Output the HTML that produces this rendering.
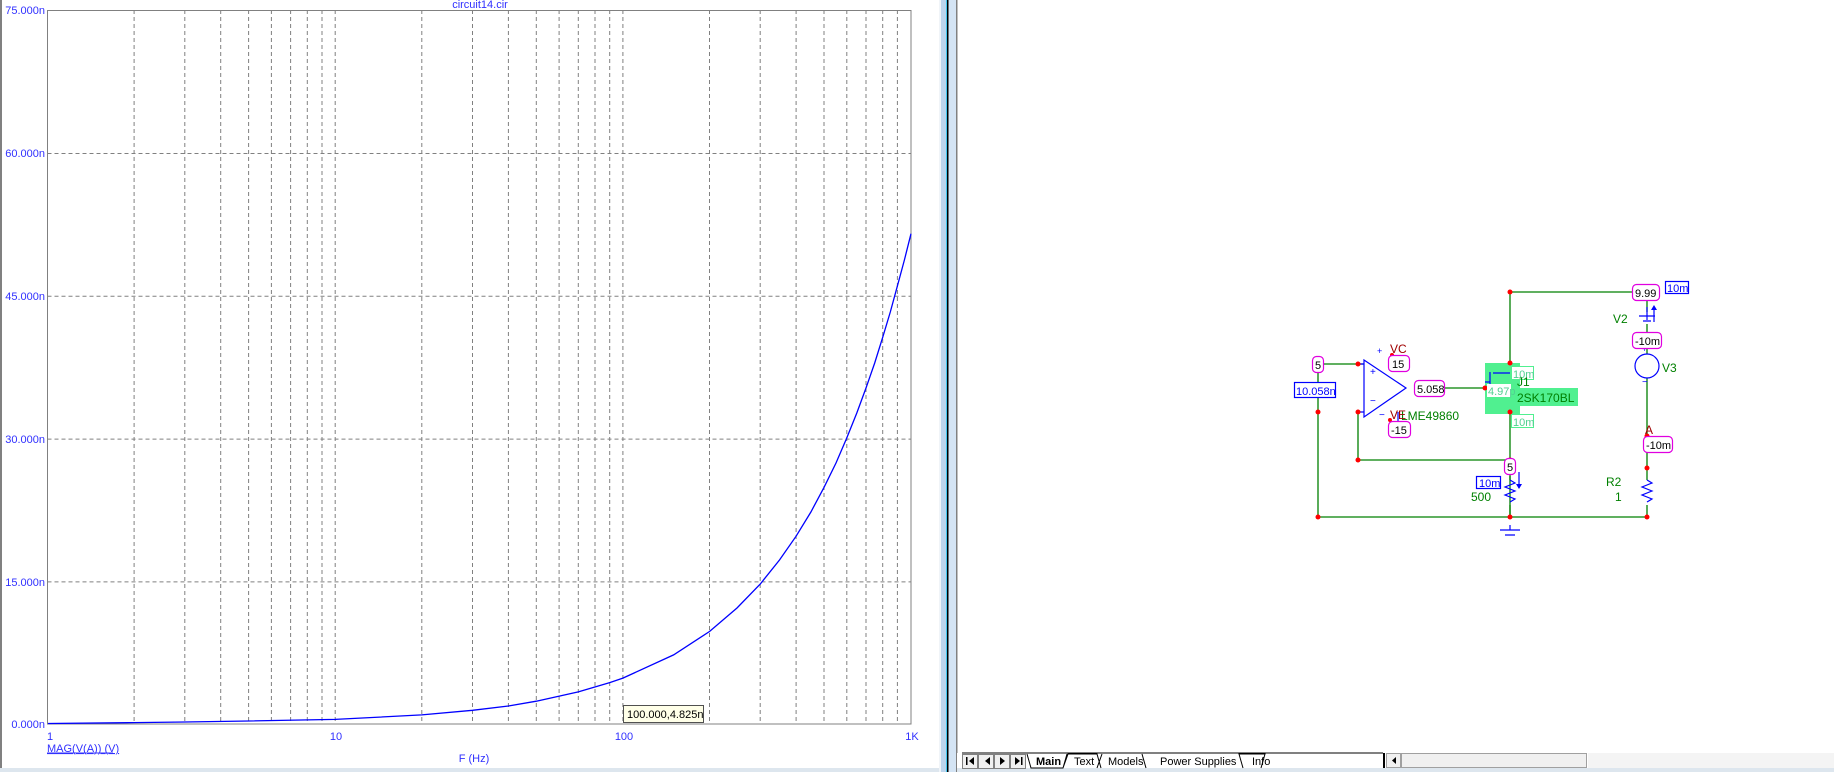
<!DOCTYPE html>
<html><head><meta charset="utf-8"><style>
html,body{margin:0;padding:0;width:1834px;height:772px;overflow:hidden;background:#fff;font-family:"Liberation Sans",Arial,sans-serif}
svg{position:absolute;left:0;top:0}
</style></head><body>
<svg width="1834" height="772" viewBox="0 0 1834 772" xmlns="http://www.w3.org/2000/svg" font-family="Liberation Sans, Arial, sans-serif">
<!-- left panel -->
<rect x="0" y="0" width="2" height="768" fill="#808080"/>
<rect x="0" y="768" width="940" height="4" fill="#dde6ee"/>
<!-- divider -->
<rect x="939" y="0" width="2" height="772" fill="#f0f4f8"/>
<rect x="941" y="0" width="5" height="772" fill="#bcd4ec"/>
<rect x="946" y="0" width="1" height="772" fill="#40c8f0"/>
<rect x="947" y="0" width="1.5" height="772" fill="#000"/>
<rect x="948.5" y="0" width="7.5" height="772" fill="#d4e4f4"/>
<rect x="956" y="0" width="1.5" height="772" fill="#808080"/>
<!-- grid -->
<g stroke="#808080" stroke-width="1" stroke-dasharray="4,3" fill="none">
<path d="M134.1 10V724M184.8 10V724M220.7 10V724M248.6 10V724M271.4 10V724M290.6 10V724M307.3 10V724M322 10V724M335.2 10V724
M421.8 10V724M472.5 10V724M508.4 10V724M536.3 10V724M559.1 10V724M578.3 10V724M595 10V724M609.7 10V724M622.9 10V724
M709.5 10V724M760.2 10V724M796.1 10V724M824 10V724M846.8 10V724M866 10V724M882.7 10V724M897.4 10V724"/>
<path d="M47.5 153.5H911M47.5 296.3H911M47.5 439.1H911M47.5 581.9H911"/>
</g>
<rect x="47.5" y="10.5" width="863.5" height="713.5" fill="none" stroke="#808080" stroke-width="1"/>
<!-- curve -->
<polyline fill="none" stroke="#0000ff" stroke-width="1.3" points="48,723.5 134,722.6 184.8,722 248.6,721 335.2,719.4 421.8,714.9 472.5,710.3 508.4,706 536.3,701.2 578.3,691.9 609.7,682.6 622.9,678.1 673.6,654.9 709.5,631.5 737,608 760.2,584.1 779.5,560 796.1,536.2 810.9,512 824,487.4 836,463 846.7,438.1 856.8,413 866,388 874.7,363 882.7,337.3 890.3,312 897.4,285.9 904.4,260 911,233.7"/>
<!-- labels -->
<g fill="#3030ff" font-size="11" text-anchor="end">
<text x="45" y="14">75.000n</text>
<text x="45" y="157">60.000n</text>
<text x="45" y="300">45.000n</text>
<text x="45" y="443">30.000n</text>
<text x="45" y="586">15.000n</text>
<text x="45" y="728">0.000n</text>
</g>
<g fill="#3030ff" font-size="11" text-anchor="middle">
<text x="50" y="740">1</text>
<text x="336" y="740">10</text>
<text x="624" y="740">100</text>
<text x="912" y="740">1K</text>
<text x="480" y="8">circuit14.cir</text>
<text x="474" y="762">F (Hz)</text>
</g>
<text x="47" y="752" fill="#3030ff" font-size="11" text-decoration="underline">MAG(V(A)) (V)</text>
<line x1="47" y1="753" x2="113" y2="753" stroke="#3030ff"/>
<rect x="623.5" y="705.5" width="80" height="17" fill="#ffffe8" stroke="#505050"/>
<text x="627" y="718" font-size="11" fill="#000">100.000,4.825n</text>

<!-- circuit wires -->
<g stroke="#008000" stroke-width="1.3" fill="none">
<path d="M1510 292H1633M1659 292H1647"/>
<path d="M1510 292V363M1510 412V517M1318 373V388M1318 398V517M1318 517H1647"/>
<path d="M1323 364H1364M1358 412V460H1510M1444 388H1485"/>
<path d="M1647 300V312M1647 324V332M1647 348V354M1647 378V436M1647 452V480M1647 505V517"/>
<path d="M1510 476V480M1510 505V517"/>
</g>
<!-- opamp -->
<g stroke="#0000ff" stroke-width="1.2" fill="none">
<path d="M1364 360V417L1406 388Z"/>
<path d="M1358 364H1364M1358 412H1364M1398 355V365M1398 412V424"/>
<path d="M1647 307V320M1639 316H1655M1643 321H1651"/>
<circle cx="1647" cy="366" r="12"/>
<path d="M1510 480l5 3-10 4 10 4-10 4 10 4-5 3"/>
<path d="M1647 480l5 3-10 4 10 4-10 4 10 4-5 3"/>
<path d="M1510 525V530M1500 530H1520M1505 535H1515"/>
<path d="M1490 378V398M1493 379H1510M1493 397H1510"/>
<path d="M1519 472V488M1654 307V322"/>
</g>
<g font-size="10" fill="#0000ff">
<text x="1370" y="375">+</text><text x="1370" y="404">−</text>
<text x="1377" y="354" font-size="9">+</text><text x="1379" y="418">−</text>
<text x="1642" y="385">−</text><text x="1642" y="352" font-size="9">+</text>
</g>
<path d="M1519 489l-3-5h6z M1654 305l-3 5h6z M1490 382l-4 -3v6z M1334 386l-2 5h4z" fill="#0000ff"/>
<!-- JFET highlight -->
<rect x="1485" y="363" width="35" height="51" fill="#50f090"/>
<rect x="1516" y="388" width="62" height="18" fill="#50f090"/>
<g stroke="#0000ff" stroke-width="1.2" fill="none"><path d="M1490 372V392M1493 373H1510M1493 391H1510M1485 382H1490"/></g>
<!-- dots -->
<g fill="#ff0000">
<circle cx="1510" cy="292" r="2.5"/><circle cx="1318" cy="412" r="2.5"/><circle cx="1358" cy="364" r="2.5"/>
<circle cx="1358" cy="412" r="2.5"/><circle cx="1358" cy="460" r="2.5"/><circle cx="1510" cy="460" r="2.5"/>
<circle cx="1318" cy="517" r="2.5"/><circle cx="1510" cy="517" r="2.5"/><circle cx="1647" cy="517" r="2.5"/>
<circle cx="1647" cy="468" r="2.5"/><circle cx="1647" cy="436" r="2.5"/><circle cx="1510" cy="363" r="2.5"/>
<circle cx="1510" cy="412" r="2.5"/><circle cx="1485" cy="388" r="2.5"/><circle cx="1392" cy="355" r="2"/><circle cx="1390" cy="420" r="2"/>
</g>
<!-- labels: magenta rounded boxes -->
<g stroke="#e000e0" stroke-width="1.2" fill="#fff">
<rect x="1312.5" y="356.5" width="11" height="16" rx="4"/>
<rect x="1388.5" y="355.5" width="21" height="16" rx="4"/>
<rect x="1388.5" y="421.5" width="22" height="16" rx="4"/>
<rect x="1414.5" y="380.5" width="30" height="16" rx="4"/>
<rect x="1632.5" y="284.5" width="27" height="16" rx="4"/>
<rect x="1632.5" y="332.5" width="29" height="16" rx="4"/>
<rect x="1643.5" y="436.5" width="29" height="16" rx="4"/>
<rect x="1504.5" y="458.5" width="11" height="16" rx="4"/>
</g>
<g stroke="#0000ff" stroke-width="1.2" fill="#fff">
<rect x="1294.5" y="382.5" width="41" height="15"/>
<rect x="1665.5" y="281.5" width="23" height="12"/>
<rect x="1476.5" y="476.5" width="24" height="12"/>
</g>
<g stroke="#50f090" stroke-width="1" fill="#fff">
<rect x="1511.5" y="366.5" width="22" height="13"/>
<rect x="1487" y="384" width="24" height="13" stroke="none"/>
<rect x="1511.5" y="414.5" width="22" height="13"/>
</g>
<g font-size="11" fill="#000">
<text x="1315" y="369">5</text><text x="1392" y="368">15</text><text x="1391" y="434">-15</text>
<text x="1417" y="393">5.058</text><text x="1635" y="297">9.99</text><text x="1635" y="345">-10m</text>
<text x="1646" y="449">-10m</text><text x="1507" y="471">5</text>
</g>
<g font-size="11" fill="#0000ff">
<text x="1296" y="395">10.058n</text><text x="1667" y="292">10m</text><text x="1479" y="487">10m</text>
</g>
<g font-size="11" fill="#50d090">
<text x="1513" y="378">10m</text><text x="1488" y="395">4.97p</text><text x="1513" y="426">10m</text>
</g>
<g font-size="12" fill="#008000">
<text x="1517" y="386">J1</text><text x="1517" y="402">2SK170BL</text>
<text x="1401" y="420">LME49860</text><text x="1662" y="372">V3</text><text x="1613" y="323">V2</text>
<text x="1606" y="486">R2</text><text x="1615" y="501">1</text><text x="1471" y="501">500</text>
</g>
<g font-size="12" fill="#a00000">
<text x="1390" y="353">VC</text><text x="1390" y="419">VE</text><text x="1645" y="434">A</text>
</g>

<!-- tab bar -->
<rect x="957" y="753" width="877" height="15" fill="#fff"/>
<rect x="957" y="768" width="877" height="4" fill="#dde6ee"/>
<line x1="962" y1="753" x2="1383" y2="753" stroke="#000"/>
<g stroke="#808080" fill="#f0f0f0">
<rect x="962.5" y="754.5" width="15" height="14"/><rect x="978.5" y="754.5" width="15" height="14"/>
<rect x="994.5" y="754.5" width="15" height="14"/><rect x="1010.5" y="754.5" width="15" height="14"/>
</g>
<g fill="#000">
<rect x="966" y="757" width="1.5" height="8"/><path d="M974 757v8l-5-4z"/>
<path d="M990 757v8l-5-4z"/><path d="M1000 757v8l5-4z"/>
<path d="M1015 757v8l5-4z"/><rect x="1021" y="757" width="1.5" height="8"/>
</g>
<path d="M1027 754l4 14H1063l4-14M1063 768l5-14h29l4 14M1097 768l5-14M1146 768l-4-14M1142 754l4 14M1243 768l-4-14h26l-4 14" stroke="#000" fill="none"/>
<g font-size="11" fill="#000">
<text x="1036" y="765" font-weight="bold">Main</text>
<text x="1074" y="765">Text</text>
<text x="1108" y="765">Models</text>
<text x="1160" y="765">Power Supplies</text>
<text x="1252" y="765">Info</text>
</g>
<rect x="1383" y="753" width="2" height="15" fill="#000"/>
<rect x="1386.5" y="753.5" width="14" height="14" fill="#f0f0f0" stroke="#a0a0a0"/>
<path d="M1396 757v7l-4-3.5z" fill="#000"/>
<rect x="1401.5" y="753.5" width="185" height="14" fill="#f0f0f0" stroke="#a0a0a0"/>
<rect x="1588" y="753" width="246" height="15" fill="#f4f4f4"/>
</svg>
</body></html>
